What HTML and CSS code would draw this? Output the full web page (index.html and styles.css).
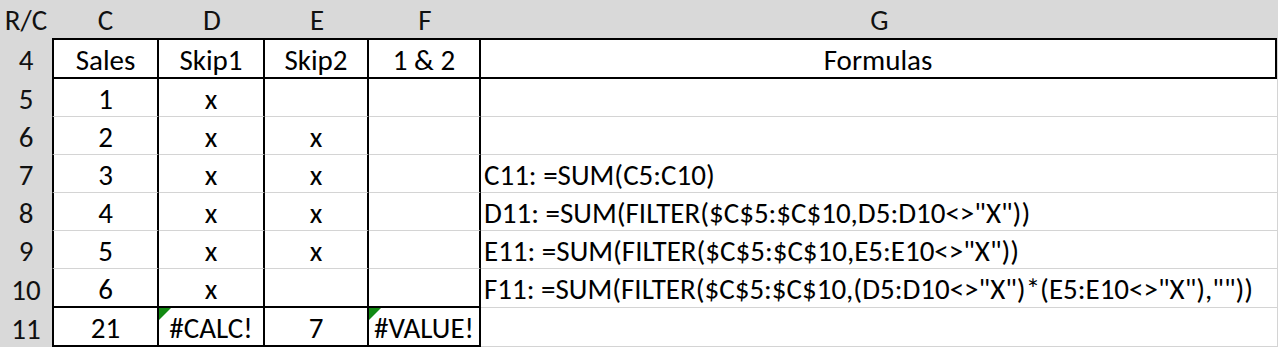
FILE: index.html
```html
<!DOCTYPE html>
<html lang="en">
<head>
<meta charset="utf-8">
<title>Sheet</title>
<link rel="stylesheet" href="styles.css">
</head>
<body>
<div class="sheet">
  <div class="hd corner">R/C</div>
  <div class="hd">C</div>
  <div class="hd">D</div>
  <div class="hd">E</div>
  <div class="hd">F</div>
  <div class="hd">G</div>

  <div class="rh">4</div>
  <div class="c cl top thickb">Sales</div>
  <div class="c top thickb">Skip1</div>
  <div class="c top thickb">Skip2</div>
  <div class="c top thickb">1 &amp; 2</div>
  <div class="c gbox">Formulas</div>

  <div class="rh">5</div>
  <div class="c cl">1</div>
  <div class="c">x</div>
  <div class="c"></div>
  <div class="c"></div>
  <div class="gc"></div>

  <div class="rh">6</div>
  <div class="c cl">2</div>
  <div class="c">x</div>
  <div class="c">x</div>
  <div class="c"></div>
  <div class="gc"></div>

  <div class="rh">7</div>
  <div class="c cl">3</div>
  <div class="c">x</div>
  <div class="c">x</div>
  <div class="c"></div>
  <div class="gc">C11: =SUM(C5:C10)</div>

  <div class="rh">8</div>
  <div class="c cl">4</div>
  <div class="c">x</div>
  <div class="c">x</div>
  <div class="c"></div>
  <div class="gc">D11: =SUM(FILTER($C$5:$C$10,D5:D10&lt;&gt;"X"))</div>

  <div class="rh">9</div>
  <div class="c cl">5</div>
  <div class="c">x</div>
  <div class="c">x</div>
  <div class="c"></div>
  <div class="gc">E11: =SUM(FILTER($C$5:$C$10,E5:E10&lt;&gt;"X"))</div>

  <div class="rh">10</div>
  <div class="c cl thickb">6</div>
  <div class="c thickb">x</div>
  <div class="c thickb"></div>
  <div class="c thickb"></div>
  <div class="gc">F11: =SUM(FILTER($C$5:$C$10,(D5:D10&lt;&gt;"X")*(E5:E10&lt;&gt;"X"),""))</div>

  <div class="rh">11</div>
  <div class="c cl thickb">21</div>
  <div class="c thickb err">#CALC!</div>
  <div class="c thickb">7</div>
  <div class="c thickb err">#VALUE!</div>
  <div class="gc"></div>
</div>
</body>
</html>
```
FILE: styles.css
```css
* { box-sizing: border-box; }
html, body { margin: 0; padding: 0; background: #fff; }
body {
  font-family: Carlito, Calibri, "Open Sans", sans-serif;
  font-size: 29px;
  color: #000;
}
.sheet {
  display: grid;
  grid-template-columns: 52px 107px 106px 104px 112px 797px;
  grid-template-rows: 38px 41px 38px 38px 38px 38px 38px 39px 39px;
  width: 1278px;
  height: 347px;
  overflow: hidden;
}
.hd {
  background: #d9d9d9;
  display: flex;
  align-items: center;
  justify-content: center;
  line-height: 1;
  padding-top: 3px;
  color: #111;
}
.rh {
  background: #d9d9d9;
  display: flex;
  align-items: center;
  justify-content: center;
  line-height: 1;
  padding-top: 3px;
  color: #111;
}
.c {
  position: relative;
  display: flex;
  align-items: center;
  justify-content: center;
  line-height: 1;
  padding-top: 3px;
  border-right: 2px solid #000;
  border-bottom: 1px solid #d4d4d4;
  white-space: nowrap;
}
.cl { border-left: 2px solid #000; }
.top { border-top: 2px solid #000; }
.thickb { border-bottom: 2px solid #000; }
.gbox {
  border-top: 2px solid #000;
  border-bottom: 2px solid #000;
  border-right: 2px solid #000;
  margin-right: 1px;
  box-shadow: 1px 0 0 #d4d4d4;
}
.gc {
  display: flex;
  align-items: center;
  padding-left: 3px;
  padding-top: 3px;
  line-height: 1;
  white-space: nowrap;
  border-right: 1px solid #d4d4d4;
  border-bottom: 1px solid #d4d4d4;
}
.err::before {
  content: "";
  position: absolute;
  top: 0;
  left: 0;
  width: 0;
  height: 0;
  border-top: 12px solid #138a13;
  border-right: 12px solid transparent;
}
```
